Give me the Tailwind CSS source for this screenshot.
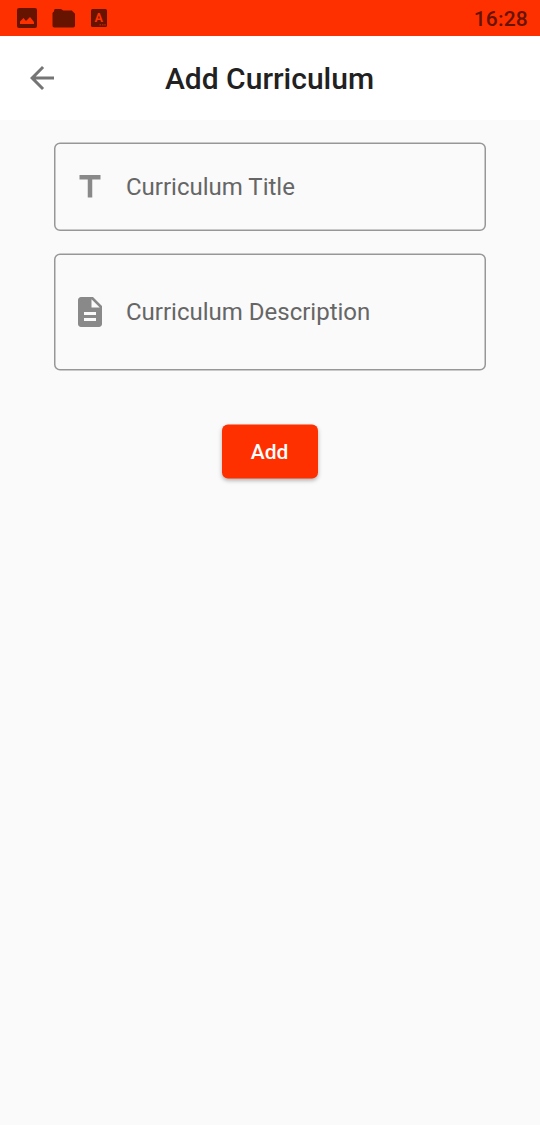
<!DOCTYPE html>
<html lang="en">
<head>
<meta charset="utf-8">
<title>Add Curriculum</title>
<script src="https://cdn.jsdelivr.net/npm/@tailwindcss/browser@4"></script>
</head>
<body class="flex h-[1125px] w-[540px] flex-col overflow-hidden bg-[#fafafa] font-['Roboto',sans-serif]">
  <div class="flex h-9 shrink-0 items-center justify-between bg-[#ff3000] pr-3 pl-[17px] text-[#661300]">
    <div class="flex h-9 items-center">
      <svg class="h-5 w-5" viewBox="0 0 20 20"><rect width="20" height="20" rx="2" fill="currentColor"/><path d="M3 16v-2.500l3.500-3.500L9 13 13 9l4 5V16z" fill="#ff3000"/></svg>
      <svg class="ml-[15px] h-5 w-6" viewBox="0 0 24 20" fill="currentColor"><path d="M3.500 1H9l2.200 1.500h8.600l3.200 3.300v12q0 1.700-1.800 1.700H2.300Q.5 19.500.5 17.800V5.500q0-1.400 1.600-1.900V2.400Q2.100 1 3.500 1z"/></svg>
      <svg class="ml-[15px] h-[18px] w-4" viewBox="0 0 16 18"><rect width="16" height="18" rx="1.500" fill="currentColor"/><text x="7.700" y="13" text-anchor="middle" class="text-[12.5px] font-bold" fill="#ff3000">A</text><path d="M8.500 15.800h1.500M11 15.800h1.500M13.300 15.800h1.500" stroke="#c82500" stroke-width="1.300"/></svg>
    </div>
    <span class="pt-0.5 text-[21px] leading-6 font-medium tracking-[0.2px]">16:28</span>
  </div>

  <header class="grid h-[84px] shrink-0 grid-cols-[60px_1fr_60px] items-center bg-white">
    <svg class="ml-6 h-9 w-9 text-[#757575]" viewBox="0 0 24 24" fill="currentColor"><path d="M20 11H7.830l5.590-5.590L12 4l-8 8 8 8 1.410-1.410L7.830 13H20v-2z"/></svg>
    <h1 class="pt-0.5 pr-px text-center text-[30px] leading-9 font-medium text-[#212121]">Add Curriculum</h1>
  </header>

  <main class="flex flex-col items-center px-[54px] pt-[22px]">
    <label class="relative flex h-[90px] w-full items-center pl-[18px] text-[#898989]">
      <svg class="absolute inset-0 h-full w-full" viewBox="0 0 432 90" fill="none"><rect x=".75" y="1.250" width="430.500" height="87" rx="5.250" stroke="#979797" stroke-width="1.500"/></svg>
      <svg class="h-9 w-9" viewBox="0 0 24 24" fill="currentColor"><path d="M5 4v3h5.500v12h3V7H19V4z"/></svg>
      <span class="ml-[18px] text-[24px] leading-7 text-[#666666]">Curriculum Title</span>
    </label>
    <label class="relative mt-[21px] flex h-[118px] w-full items-center pl-[18px] text-[#898989]">
      <svg class="absolute inset-0 h-full w-full" viewBox="0 0 432 118" fill="none"><rect x=".75" y="1.250" width="430.500" height="115.500" rx="5.250" stroke="#979797" stroke-width="1.500"/></svg>
      <svg class="h-9 w-9" viewBox="0 0 24 24" fill="currentColor"><path d="M14 2H6c-1.100 0-1.990.9-1.990 2L4 20c0 1.100.89 2 1.990 2H18c1.100 0 2-.9 2-2V8l-6-6zm2 16H8v-2h8v2zm0-4H8v-2h8v2zm-3-5V3.500L18.500 9H13z"/></svg>
      <span class="ml-[18px] text-[24px] leading-7 text-[#666666]">Curriculum Description</span>
    </label>
    <button class="relative mt-[53px] h-[55px] w-24 pt-px pr-px text-[21px] leading-6 font-medium text-white">
      <svg class="absolute inset-0 h-full w-full overflow-visible drop-shadow-[0_2px_2px_rgba(0,0,0,0.3)]" viewBox="0 0 96 55"><rect y=".5" width="96" height="54" rx="6" fill="#ff3000"/></svg>
      <span class="relative">Add</span>
    </button>
  </main>
</body>
</html>
